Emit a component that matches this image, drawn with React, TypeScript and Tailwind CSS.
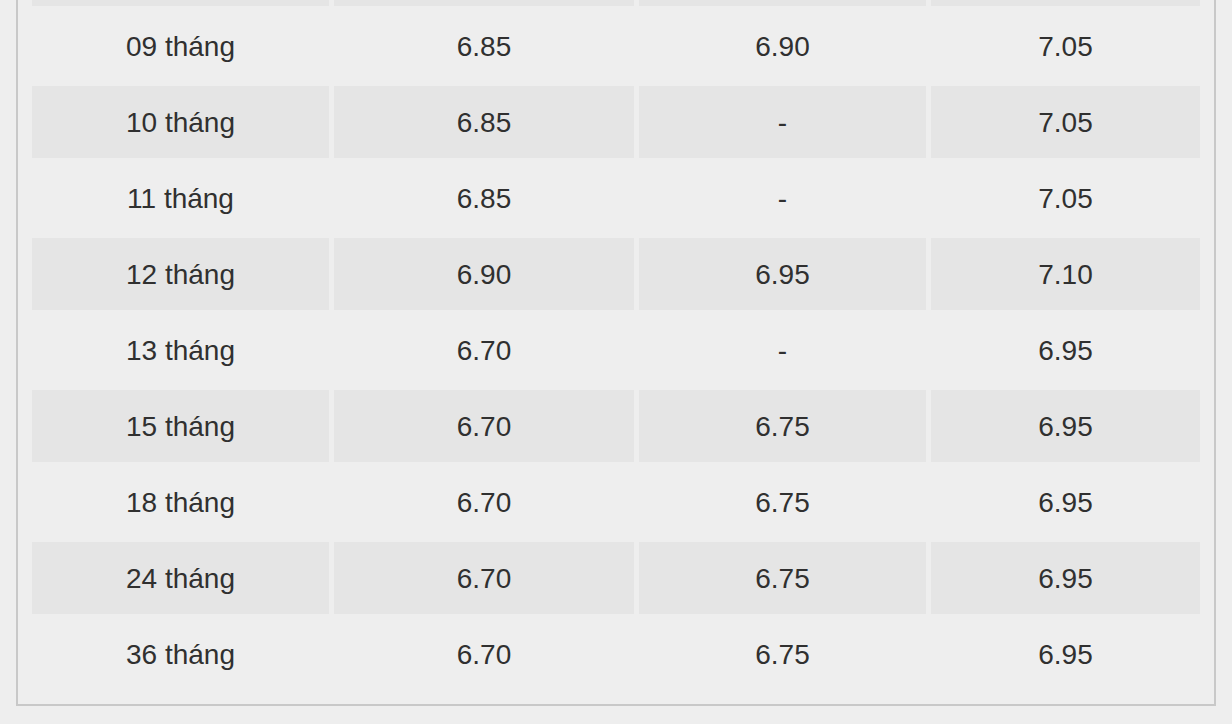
const rows: [string, string, string, string][] = [
  ["", "", "", ""],
  ["09 tháng", "6.85", "6.90", "7.05"],
  ["10 tháng", "6.85", "-", "7.05"],
  ["11 tháng", "6.85", "-", "7.05"],
  ["12 tháng", "6.90", "6.95", "7.10"],
  ["13 tháng", "6.70", "-", "6.95"],
  ["15 tháng", "6.70", "6.75", "6.95"],
  ["18 tháng", "6.70", "6.75", "6.95"],
  ["24 tháng", "6.70", "6.75", "6.95"],
  ["36 tháng", "6.70", "6.75", "6.95"],
];

export default function App() {
  return (
    <div className="h-[724px] w-[1232px] overflow-hidden bg-[#eeeeee] px-4 font-['Liberation_Sans',Arial,sans-serif] text-[28px] text-[#303030]">
      <div className="-mt-[70px] border-x-2 border-b-2 border-[#c8c8c8] px-[10px] pb-[10px]">
        <div className="grid grid-cols-[297px_300px_287px_269px] gap-x-[5px] gap-y-1 p-1">
          {rows.map((r, i) =>
            r.map((c, j) => (
              <div
                key={`${i}-${j}`}
                className={`flex h-[72px] items-center justify-center pt-[2px] ${i % 2 === 0 ? "bg-[#e5e5e5]" : ""}`}
              >
                {c}
              </div>
            ))
          )}
        </div>
      </div>
    </div>
  );
}
